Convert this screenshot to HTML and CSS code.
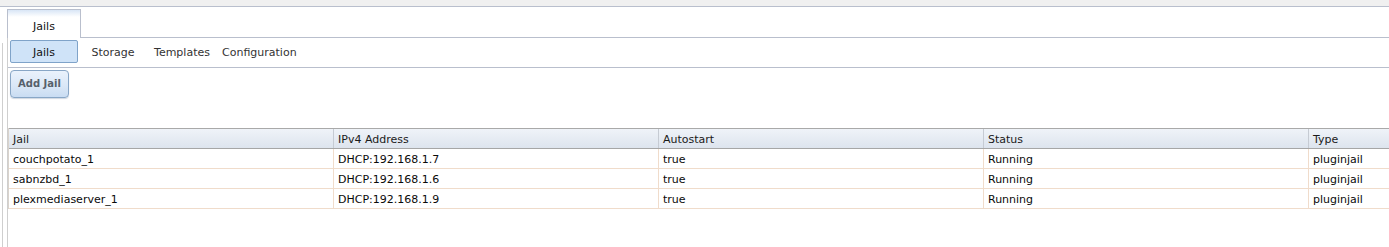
FILE: index.html
```html
<!DOCTYPE html>
<html>
<head>
<meta charset="utf-8">
<link rel="stylesheet" href="styles.css">
</head>
<body>
<div class="topbar"></div>
<div class="frame">
  <div class="gutter"><div class="gutter-line"></div></div>
  <div class="main">
    <div class="tabstrip">
      <div class="tab">Jails</div>
    </div>
    <div class="panel">
      <div class="subtabs">
        <div class="subtab active">Jails</div>
        <div class="subtab">Storage</div>
        <div class="subtab">Templates</div>
        <div class="subtab">Configuration</div>
      </div>
      <div class="toolbar">
        <button class="btn">Add Jail</button>
      </div>
      <div class="grid-wrap">
        <div class="grid" role="table">
          <div class="row head" role="row">
            <div class="cell" role="columnheader">Jail</div>
            <div class="cell" role="columnheader">IPv4 Address</div>
            <div class="cell" role="columnheader">Autostart</div>
            <div class="cell" role="columnheader">Status</div>
            <div class="cell" role="columnheader">Type</div>
          </div>
          <div class="row" role="row">
            <div class="cell">couchpotato_1</div>
            <div class="cell">DHCP:192.168.1.7</div>
            <div class="cell">true</div>
            <div class="cell">Running</div>
            <div class="cell">pluginjail</div>
          </div>
          <div class="row" role="row">
            <div class="cell">sabnzbd_1</div>
            <div class="cell">DHCP:192.168.1.6</div>
            <div class="cell">true</div>
            <div class="cell">Running</div>
            <div class="cell">pluginjail</div>
          </div>
          <div class="row" role="row">
            <div class="cell">plexmediaserver_1</div>
            <div class="cell">DHCP:192.168.1.9</div>
            <div class="cell">true</div>
            <div class="cell">Running</div>
            <div class="cell">pluginjail</div>
          </div>
        </div>
      </div>
    </div>
  </div>
</div>
</body>
</html>
```
FILE: styles.css
```css
html, body {
  margin: 0;
  padding: 0;
  background: #ffffff;
  overflow: hidden;
  height: 247px;
}
body {
  font-family: "DejaVu Sans", Verdana, sans-serif;
  font-size: 11px;
  color: #111;
}
.topbar {
  height: 6px;
  background: #f0f0f0;
  border-bottom: 1px solid #b9bfcd;
}
.frame {
  display: flex;
  height: 240px;
  overflow: hidden;
}
.gutter {
  width: 7px;
  flex: none;
}
.gutter-line {
  margin-top: 36px;
  margin-left: 2px;
  width: 1px;
  height: 204px;
  background: #cfcfcf;
}
.main {
  flex: 1;
  display: flex;
  flex-direction: column;
  min-width: 0;
}
.tabstrip {
  height: 30px;
  display: flex;
  align-items: flex-end;
  border-bottom: 1px solid #b9bfcd;
}
.tab {
  width: 72px;
  margin-bottom: -1px;
  border: 1px solid #b9bfcd;
  border-bottom: none;
  background: linear-gradient(#d9e6f6 0px, #ffffff 7px, #ffffff 100%);
  display: flex;
  align-items: center;
  justify-content: center;
  padding-top: 5px;
  box-sizing: content-box;
  height: 23px;
  color: #111;
}
.panel {
  flex: 1;
  border-left: 1px solid #cfcfcf;
  display: flex;
  flex-direction: column;
  min-height: 0;
}
.subtabs {
  border-bottom: 1px solid #b9bfcd;
  display: flex;
  align-items: flex-start;
  gap: 1px;
  padding: 2px 0 0 2px;
  box-sizing: border-box;
  height: 30px;
}
.subtab {
  min-width: 68px;
  height: 23px;
  box-sizing: border-box;
  padding: 1px 4px 0;
  display: flex;
  align-items: center;
  justify-content: center;
  color: #333;
  border: 1px solid transparent;
}
.subtab.active {
  background: #cfe3f8;
  border: 1px solid #7fa3c9;
  border-radius: 2px;
  color: #111;
}
.toolbar {
  padding: 2px 0 0 2px;
  height: 60px;
  box-sizing: border-box;
}
.btn {
  font-family: "DejaVu Sans", Verdana, sans-serif;
  font-size: 10px;
  font-weight: bold;
  color: #56606b;
  width: 59px;
  height: 28px;
  border: 1px solid #88a6c6;
  border-radius: 4px;
  background: linear-gradient(#eaf2fc 0%, #dbe8f7 55%, #c9dcf2 100%);
  box-shadow: 0 1px 1px rgba(120, 140, 170, 0.35);
  padding: 0 0 2px;
  cursor: pointer;
}
.grid-wrap {
  overflow: hidden;
}
.grid {
  width: 1626px;
  border-left: 1px solid #d9d3cc;
}
.row {
  display: grid;
  grid-template-columns: 325px 325px 325px 325px 325px;
  border-bottom: 1px solid #f0dccb;
}
.row .cell {
  box-sizing: border-box;
  height: 19px;
  line-height: 21px;
  padding: 0 4px;
  border-right: 1px solid #f0dccb;
  white-space: nowrap;
  overflow: hidden;
  color: #0a0a0a;
}
.row.head {
  border-top: 1px solid #a9a9a9;
  border-bottom: 1px solid #a6a6a6;
  background: linear-gradient(#eff3f8, #dde4ee);
}
.row.head .cell {
  border-right: 1px solid #c6cbd3;
  color: #1a1a1a;
}
```
